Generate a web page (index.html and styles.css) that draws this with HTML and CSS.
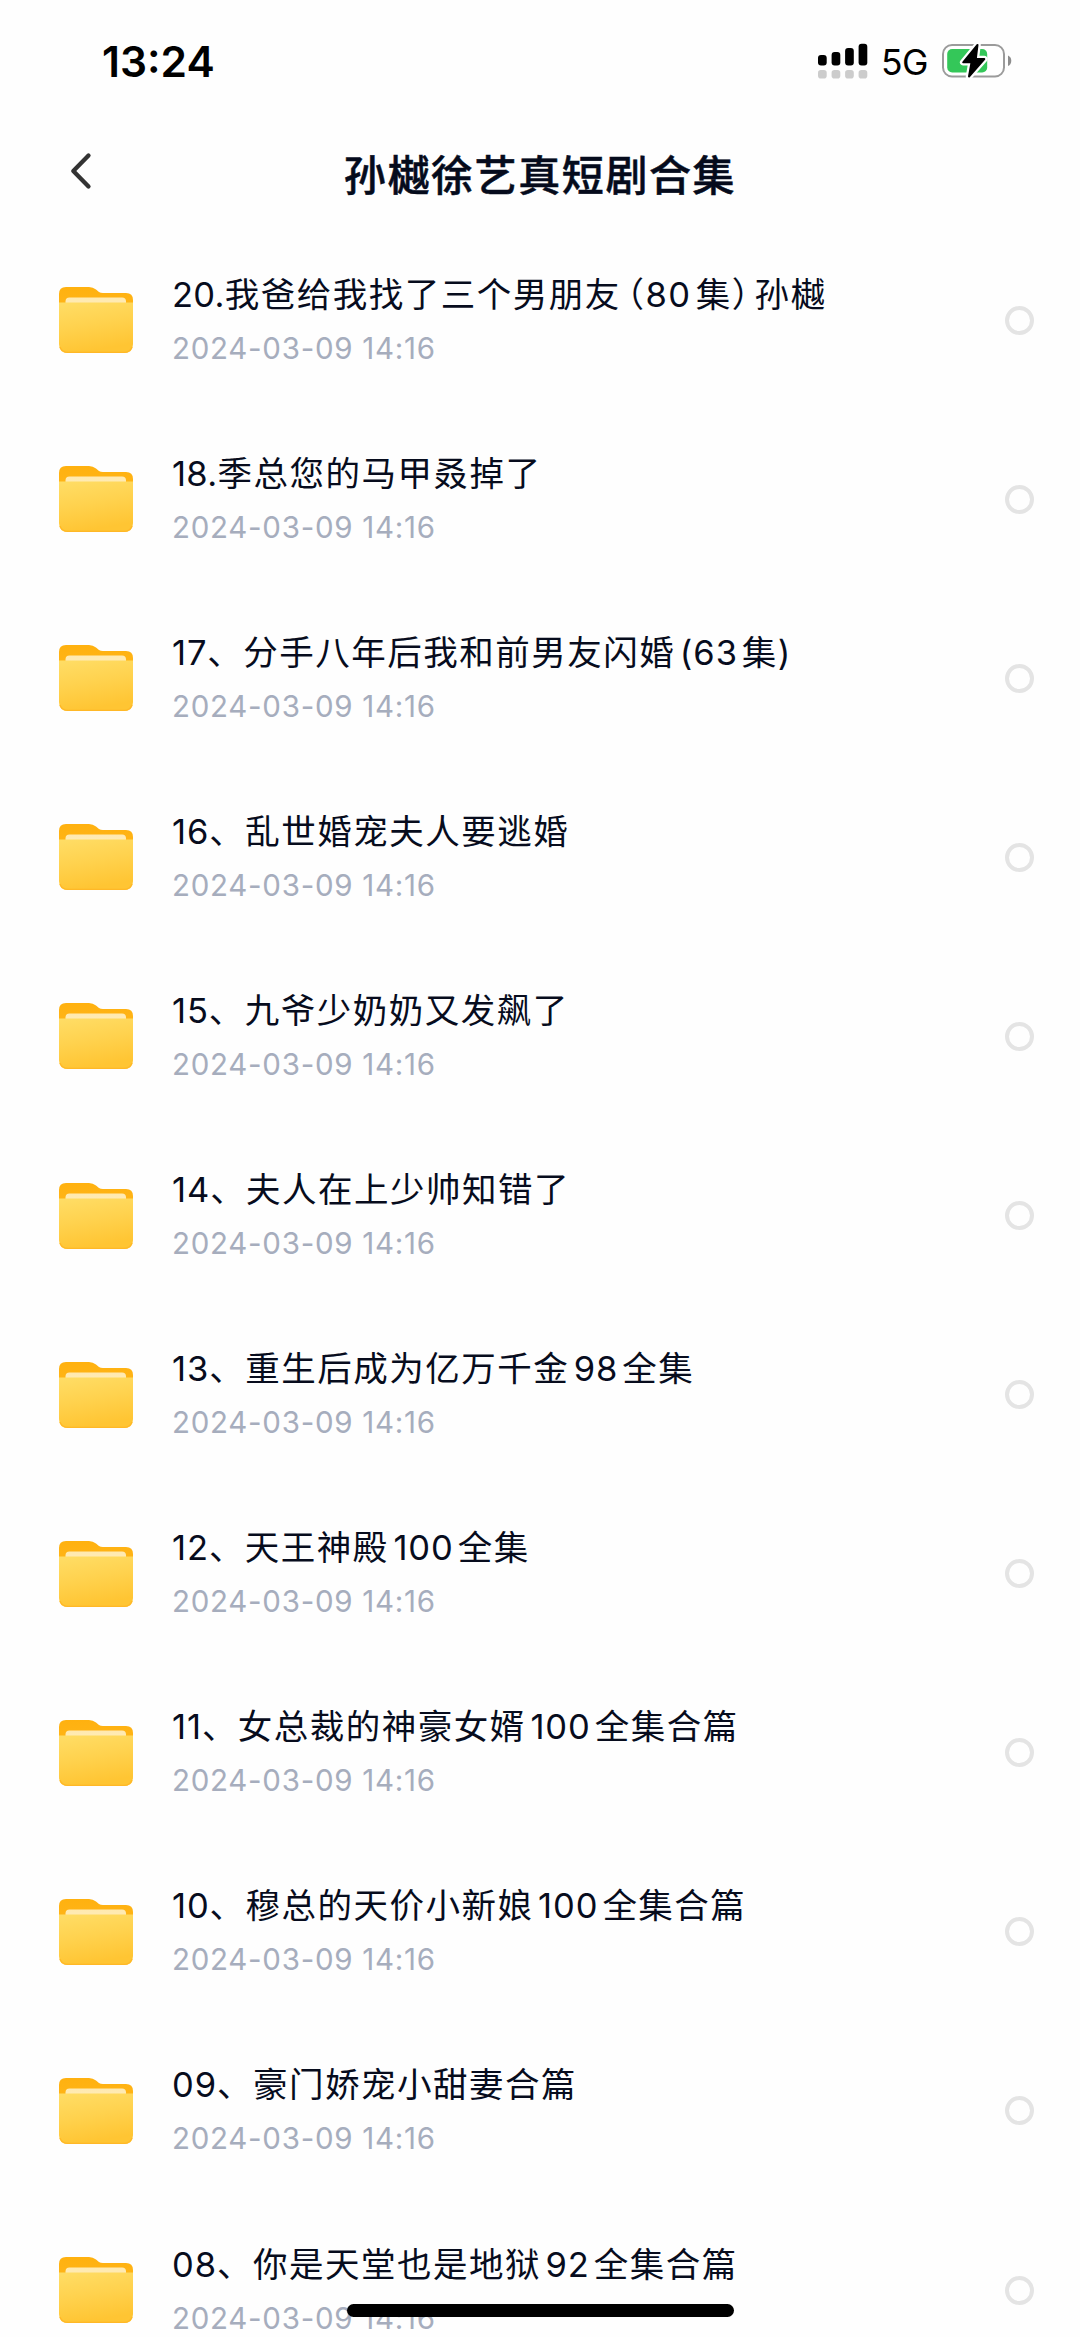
FILE: index.html
```html
<!DOCTYPE html>
<html lang="zh-CN">
<head>
<meta charset="utf-8">
<title>孙樾徐艺真短剧合集</title>
<link rel="stylesheet" href="styles.css">
</head>
<body>
<svg class="defs" width="0" height="0" aria-hidden="true">
  <defs>
    <linearGradient id="back" x1="0" y1="0" x2="0" y2="1"><stop offset="0" stop-color="#ffb10f"/><stop offset="1" stop-color="#ffb61c"/></linearGradient>
    <linearGradient id="paper" x1="0" y1="0" x2="0" y2="1"><stop offset="0" stop-color="#ffe9b0"/><stop offset="1" stop-color="#ffedb8"/></linearGradient>
    <linearGradient id="front" x1="0" y1="0" x2=".25" y2="1"><stop offset="0" stop-color="#ffdd66"/><stop offset=".5" stop-color="#ffd24e"/><stop offset="1" stop-color="#ffc533"/></linearGradient>
    <symbol id="folder" viewBox="0 0 76 68">
      <path d="M1 30V8Q1 1 8 1H31Q35 1 38 3.500L41 6Q42.500 7 45 7H68Q75 7 75 14V30Z" fill="url(#back)"/>
      <path d="M7.500 24V15.500Q7.500 11.500 11.500 11.500H64Q68 11.500 68 15.500V24Z" fill="url(#paper)"/>
      <path d="M1 16.500H75V58Q75 67 66 67H10Q1 67 1 58Z" fill="url(#front)"/>
      <path d="M2 61Q4 66.400 10 66.400H66Q72 66.400 74 61" fill="none" stroke="#ffb827" stroke-width="1.200"/>
    </symbol>
  </defs>
</svg>
<div class="screen">
  <div class="status">
    <span class="time">13:24</span>
    <div class="indicators">
      <svg class="signal" width="50" height="36" viewBox="0 0 50 36">
        <g fill="#000"><rect x="0" y="12" width="8.7" height="10.5" rx="3"/><rect x="13.6" y="9" width="8.7" height="13.5" rx="3"/><rect x="27.1" y="5" width="8.7" height="17.5" rx="3"/><rect x="40.6" y="0.8" width="8.7" height="21.7" rx="3"/></g>
        <g fill="#ccc"><rect x="0" y="27" width="8.7" height="8.5" rx="2.8"/><rect x="13.6" y="27" width="8.7" height="8.5" rx="2.8"/><rect x="27.1" y="27" width="8.7" height="8.5" rx="2.8"/><rect x="40.6" y="27" width="8.7" height="8.5" rx="2.8"/></g>
      </svg>
      <span class="network">5G</span>
      <svg class="battery" width="70" height="36" viewBox="0 0 70 36">
        <rect x="1" y="2" width="61" height="31.5" rx="9" fill="#fff" stroke="#9b9b9b" stroke-width="2"/>
        <path d="M66 12.5Q69.3 14 69.3 17.7Q69.3 21.500 66 23Z" fill="#8d8d8d"/>
        <rect x="5.200" y="6" width="40" height="23.500" rx="5" fill="#34c759"/>
        <path d="M35.500 2L21.200 19.300H29.500L27 33.500L42.300 16H33.800Z" fill="#fff" stroke="#fff" stroke-width="6.500" stroke-linejoin="round"/>
        <path d="M35.500 2L21.200 19.300H29.500L27 33.500L42.300 16H33.800Z" fill="#000" stroke="#000" stroke-width="2" stroke-linejoin="round"/>
      </svg>
    </div>
  </div>
  <header class="header">
    <svg class="back" width="24" height="40" viewBox="0 0 24 40"><path d="M19.500 4.500L4.300 20L19.500 35.500" fill="none" stroke="#333" stroke-width="4.300" stroke-linecap="round" stroke-linejoin="round"/></svg>
    <h1 class="title">孙樾徐艺真短剧合集</h1>
  </header>
  <ul class="list">
    <li class="row"><svg class="folder"><use href="#folder"/></svg><div class="info"><div class="name"><span class="dotted">20.</span>我爸给我找了三个男朋友<span class="open">（</span>80<span class="after">集</span><span class="close">）</span>孙樾</div><div class="date">2024-03-09 14:16</div></div><span class="check"></span></li>
    <li class="row"><svg class="folder"><use href="#folder"/></svg><div class="info"><div class="name"><span class="dotted">18.</span>季总您的马甲叒掉了</div><div class="date">2024-03-09 14:16</div></div><span class="check"></span></li>
    <li class="row"><svg class="folder"><use href="#folder"/></svg><div class="info"><div class="name"><span class="lead">17</span>、分手八年后我和前男友闪婚<span class="num">(63</span>集)</div><div class="date">2024-03-09 14:16</div></div><span class="check"></span></li>
    <li class="row"><svg class="folder"><use href="#folder"/></svg><div class="info"><div class="name"><span class="lead">16</span>、乱世婚宠夫人要逃婚</div><div class="date">2024-03-09 14:16</div></div><span class="check"></span></li>
    <li class="row"><svg class="folder"><use href="#folder"/></svg><div class="info"><div class="name"><span class="lead">15</span>、九爷少奶奶又发飙了</div><div class="date">2024-03-09 14:16</div></div><span class="check"></span></li>
    <li class="row"><svg class="folder"><use href="#folder"/></svg><div class="info"><div class="name"><span class="lead">14</span>、夫人在上少帅知错了</div><div class="date">2024-03-09 14:16</div></div><span class="check"></span></li>
    <li class="row"><svg class="folder"><use href="#folder"/></svg><div class="info"><div class="name"><span class="lead">13</span>、重生后成为亿万千金<span class="num">98</span>全集</div><div class="date">2024-03-09 14:16</div></div><span class="check"></span></li>
    <li class="row"><svg class="folder"><use href="#folder"/></svg><div class="info"><div class="name"><span class="lead">12</span>、天王神殿<span class="num">100</span>全集</div><div class="date">2024-03-09 14:16</div></div><span class="check"></span></li>
    <li class="row"><svg class="folder"><use href="#folder"/></svg><div class="info"><div class="name"><span class="lead">11</span>、女总裁的神豪女婿<span class="num">100</span>全集合篇</div><div class="date">2024-03-09 14:16</div></div><span class="check"></span></li>
    <li class="row"><svg class="folder"><use href="#folder"/></svg><div class="info"><div class="name"><span class="lead">10</span>、穆总的天价小新娘<span class="num">100</span>全集合篇</div><div class="date">2024-03-09 14:16</div></div><span class="check"></span></li>
    <li class="row"><svg class="folder"><use href="#folder"/></svg><div class="info"><div class="name"><span class="lead">09</span>、豪门娇宠小甜妻合篇</div><div class="date">2024-03-09 14:16</div></div><span class="check"></span></li>
    <li class="row"><svg class="folder"><use href="#folder"/></svg><div class="info"><div class="name"><span class="lead">08</span>、你是天堂也是地狱<span class="num">92</span>全集合篇</div><div class="date">2024-03-09 14:16</div></div><span class="check"></span></li>
  </ul>
  <div class="home"></div>
</div>
</body>
</html>
```
FILE: styles.css
```css
* { box-sizing: border-box; }
body { margin: 0; background: #fefefe; font-family: Inter, "Noto Sans CJK SC", sans-serif; }
.defs { position: absolute; }
.screen { position: relative; width: 1080px; height: 2337px; overflow: hidden; }
.status { display: flex; justify-content: space-between; align-items: center; height: 122px; padding: 0 68px 0 102px; color: #000; }
.time { font-size: 42.5px; font-weight: 600; }
.indicators { display: flex; align-items: center; }
.network { margin: 2px 0 0 13px; width: 61px; font-size: 35.5px; font-weight: 400; letter-spacing: -0.5px; }
.header { position: relative; display: flex; align-items: center; justify-content: center; height: 108.5px; }
.back { position: absolute; left: 69px; top: 29px; }
.title { margin: -8px 0 0; font-size: 42px; font-weight: 500; letter-spacing: 1.6px; color: #050b1c; -webkit-text-stroke: 0.5px #050b1c; }
.list { margin: 0; padding: 0; list-style: none; }
.row { display: flex; align-items: center; height: 179.1px; padding: 0 46px 0 58px; }
.folder { flex: none; width: 76px; height: 68px; }
.info { flex: 1; padding: 2px 0 0 38px; white-space: nowrap; }
.name { height: 53px; line-height: 54px; font-size: 34.5px; letter-spacing: 1.5px; color: #070c1d; }
.date { height: 54px; line-height: 54px; font-size: 29.5px; letter-spacing: 0.72px; color: #a6adbd; }
.dotted { letter-spacing: 0.3px; }
.lead { letter-spacing: 0.9px; }
.num { margin: 0 4px 0 4.5px; letter-spacing: 0.9px; }
.open { margin-left: 6px; font-feature-settings: "halt"; }
.after { margin-left: 4px; }
.close { margin-right: 4px; font-feature-settings: "halt"; }
.check { flex: none; width: 29px; height: 29px; border: 4px solid #e4e4e4; border-radius: 50%; }
.home { position: absolute; left: 347px; top: 2304px; width: 387px; height: 13px; border-radius: 7px; background: #000; }
```
